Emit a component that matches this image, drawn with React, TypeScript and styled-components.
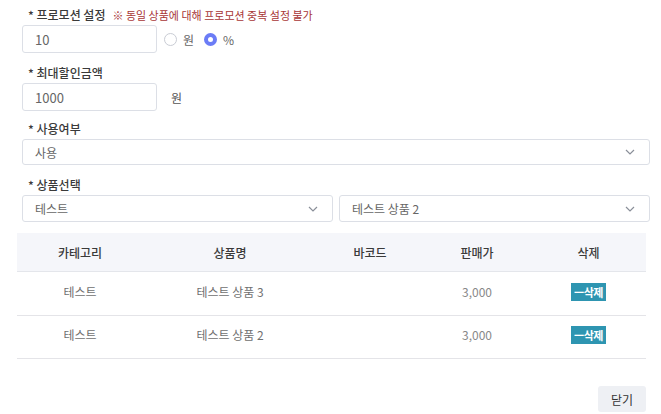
import React, { useState } from "react";
import styled, { createGlobalStyle } from "styled-components";

const GlobalStyle = createGlobalStyle`
	html, body {
		margin: 0;
		padding: 0;
		background: #fff;
	}
	body {
		font-family: "Noto Sans CJK KR", "Noto Sans", "Liberation Sans", sans-serif;
		color: #333;
	}
	* {
		box-sizing: border-box;
	}
`;

interface Product {
	category: string;
	name: string;
	barcode: string;
	price: string;
}

const products: Product[] = [
	{ category: "테스트", name: "테스트 상품 3", barcode: "", price: "3,000" },
	{ category: "테스트", name: "테스트 상품 2", barcode: "", price: "3,000" },
];

const columns = ["카테고리", "상품명", "바코드", "판매가", "삭제"];

function Chevron() {
	return (
		<svg width="10" height="6" viewBox="0 0 10 6" fill="none">
			<path d="M1 1l4 4 4-4" stroke="#8a8f99" strokeWidth="1.2" />
		</svg>
	);
}

export default function App() {
	const [unit, setUnit] = useState("percent");
	const [rows, setRows] = useState(products);

	return (
		<Page>
			<GlobalStyle />
			<Form>
				<Field $after={11}>
					<Label>
						* 프로모션 설정
						<Note>※ 동일 상품에 대해 프로모션 중복 설정 불가</Note>
					</Label>
					<Row>
						<Input defaultValue="10" />
						<RadioItem onClick={() => setUnit("won")}>
							<RadioDot $checked={unit === "won"} />
							원
						</RadioItem>
						<RadioItem onClick={() => setUnit("percent")}>
							<RadioDot $checked={unit === "percent"} />
							%
						</RadioItem>
					</Row>
				</Field>

				<Field $after={9}>
					<Label>* 최대할인금액</Label>
					<Row>
						<Input defaultValue="1000" />
						<Unit>원</Unit>
					</Row>
				</Field>

				<Field $after={11}>
					<Label>* 사용여부</Label>
					<Select>
						<span>사용</span>
						<Chevron />
					</Select>
				</Field>

				<Field $after={0}>
					<Label>* 상품선택</Label>
					<SelectPair>
						<Select $tall>
							<span>테스트</span>
							<Chevron />
						</Select>
						<Select $tall>
							<span>테스트 상품 2</span>
							<Chevron />
						</Select>
					</SelectPair>
				</Field>
			</Form>

			<Table>
				<HeadRow>
					{columns.map((c) => (
						<HeadCell key={c}>{c}</HeadCell>
					))}
				</HeadRow>
				{rows.map((p, i) => (
					<BodyRow key={p.name} $height={i === 0 ? 44 : 43}>
						<Cell>{p.category}</Cell>
						<Cell>{p.name}</Cell>
						<Cell>{p.barcode}</Cell>
						<Cell $muted>{p.price}</Cell>
						<Cell>
							<DeleteButton
								onClick={() => setRows(rows.filter((r) => r !== p))}
							>
								ㅡ삭제
							</DeleteButton>
						</Cell>
					</BodyRow>
				))}
			</Table>

			<Footer>
				<CloseButton>닫기</CloseButton>
			</Footer>
		</Page>
	);
}

const Page = styled.div`
	width: 661px;
	height: 414px;
	padding-top: 6px;
	overflow: hidden;
`;

const Form = styled.div`
	display: flex;
	flex-direction: column;
	padding: 0 11px 0 22px;
`;

const Field = styled.div<{ $after: number }>`
	display: flex;
	flex-direction: column;
	gap: 2px;
	margin-bottom: ${(p) => p.$after}px;
`;

const Label = styled.div`
	display: flex;
	align-items: center;
	gap: 7px;
	height: 17px;
	padding-left: 6px;
	font-size: 12px;
	font-weight: 500;
	color: #3a3a3a;
`;

const Note = styled.span`
	font-size: 11px;
	font-weight: 400;
	color: #a83636;
`;

const Row = styled.div`
	display: flex;
	align-items: center;
`;

const Input = styled.input`
	width: 135px;
	height: 28px;
	padding: 0 12px;
	border: 1px solid #dcdfe6;
	border-radius: 3px;
	font-family: inherit;
	font-size: 13px;
	color: #666;
	outline: none;
`;

const RadioItem = styled.label`
	display: flex;
	align-items: center;
	gap: 6px;
	margin-left: 7px;
	margin-right: 3px;
	font-size: 12px;
	color: #666;
	cursor: pointer;
`;

const RadioDot = styled.span<{ $checked: boolean }>`
	width: 13px;
	height: 13px;
	border-radius: 50%;
	border: ${(p) => (p.$checked ? "4px solid #6b7cf6" : "1px solid #c9ccd4")};
	background: #fff;
`;

const Unit = styled.span`
	margin-left: 14px;
	font-size: 12px;
	color: #555;
`;

const Select = styled.div<{ $tall?: boolean }>`
	display: flex;
	align-items: center;
	justify-content: space-between;
	height: ${(p) => (p.$tall ? 27 : 26)}px;
	padding: 0 14px 0 12px;
	border: 1px solid #dcdfe6;
	border-radius: 3px;
	font-size: 12px;
	color: #666;
`;

const SelectPair = styled.div`
	display: grid;
	grid-template-columns: 1fr 1fr;
	gap: 6px;
`;

const Table = styled.div`
	margin: 11px 15px 0 17px;
`;

const grid = `
	display: grid;
	grid-template-columns: 126px 174px 106px 108px 1fr;
	align-items: center;
`;

const HeadRow = styled.div`
	${grid}
	height: 39px;
	background: #f5f6fa;
	border-bottom: 1px solid #e4e6eb;
`;

const HeadCell = styled.div`
	text-align: center;
	font-size: 12px;
	font-weight: 500;
	color: #3a3a3a;
`;

const BodyRow = styled.div<{ $height: number }>`
	${grid}
	height: ${(p) => p.$height}px;
	padding-bottom: 5px;
	border-bottom: 1px solid #e4e4e8;
`;

const Cell = styled.div<{ $muted?: boolean }>`
	display: flex;
	justify-content: center;
	font-size: 12px;
	color: ${(p) => (p.$muted ? "#888" : "#707070")};
`;

const DeleteButton = styled.button`
	height: 18px;
	padding: 0 3px;
	margin-top: 1px;
	border: none;
	background: #2e95b1;
	color: #fff;
	font-family: inherit;
	font-size: 11px;
	font-weight: 700;
	line-height: 18px;
	letter-spacing: -0.5px;
	cursor: pointer;
`;

const Footer = styled.div`
	display: flex;
	justify-content: flex-end;
	padding: 27px 15px 0 0;
`;

const CloseButton = styled.button`
	width: 48px;
	height: 26px;
	border: none;
	border-radius: 3px;
	background: #eef0f4;
	color: #333;
	font-family: inherit;
	font-size: 12px;
	cursor: pointer;
`;
